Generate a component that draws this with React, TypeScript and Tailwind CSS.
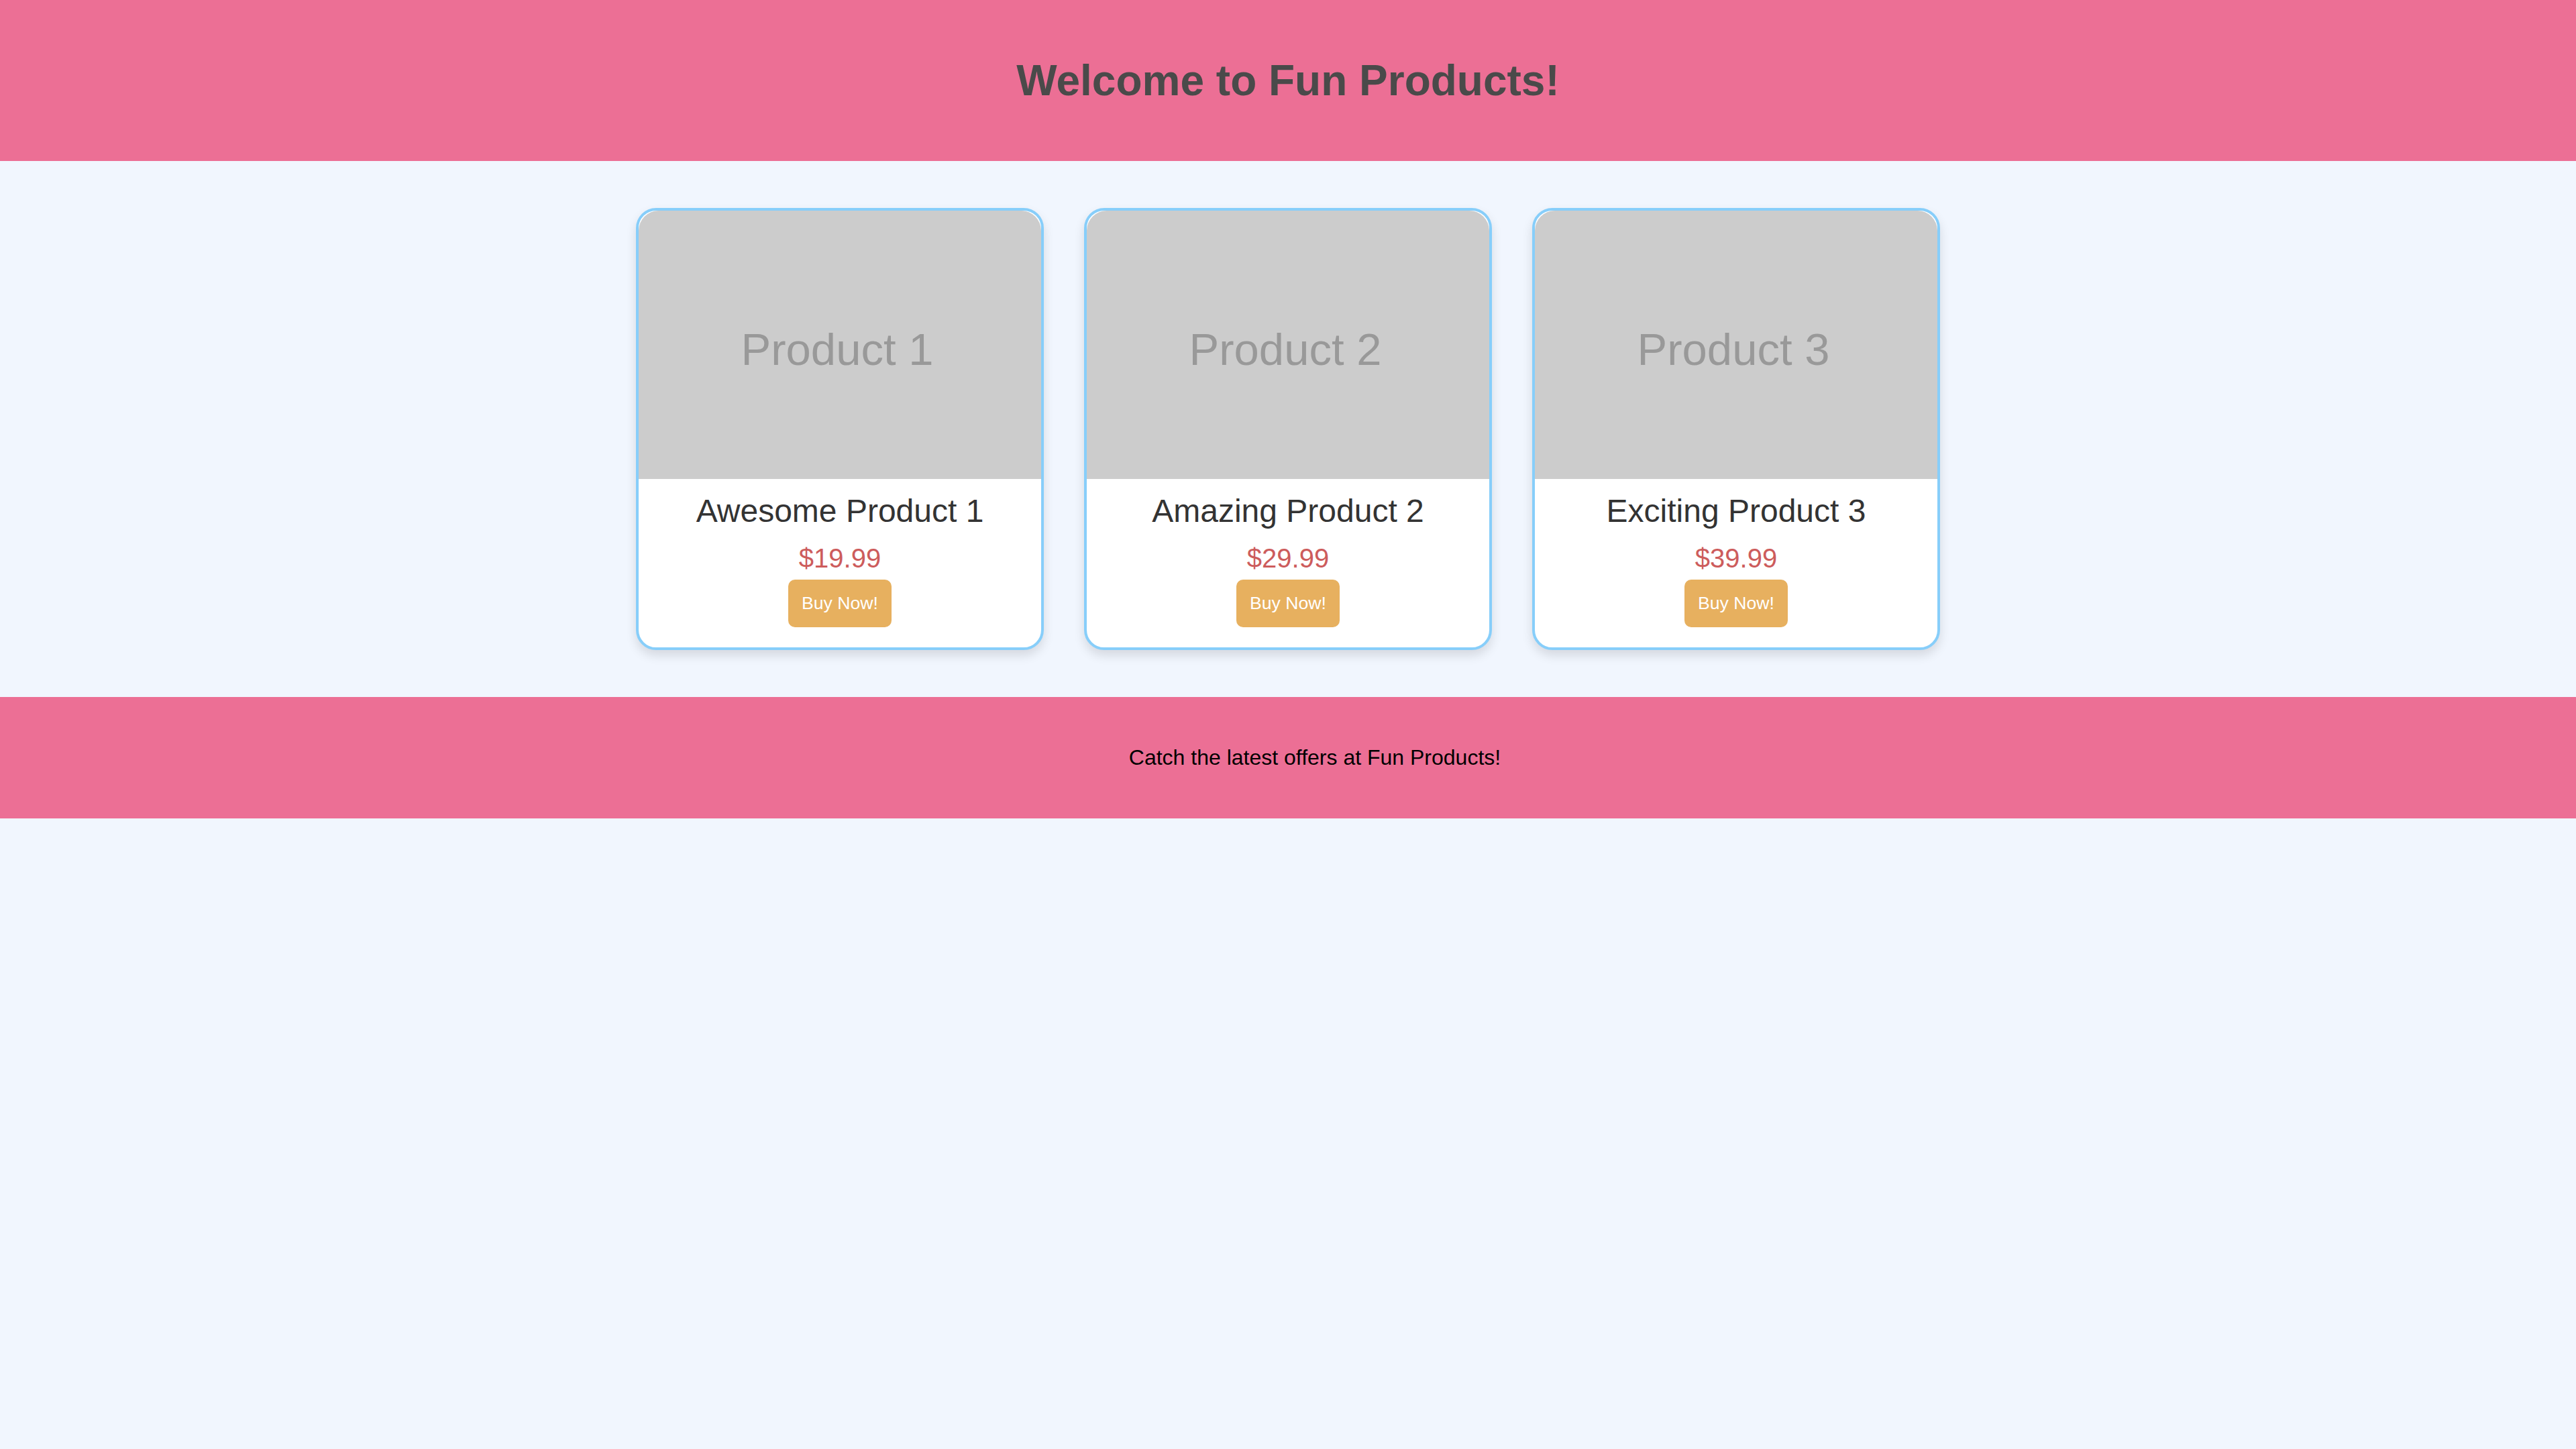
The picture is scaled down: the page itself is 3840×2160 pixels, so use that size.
import React from "react";

const products = [
  { img: "Product 1", name: "Awesome Product 1", price: "$19.99" },
  { img: "Product 2", name: "Amazing Product 2", price: "$29.99" },
  { img: "Product 3", name: "Exciting Product 3", price: "$39.99" },
];

export default function App() {
  return (
    <div
      className="min-h-[2160px] w-full bg-[#F1F6FE] overflow-hidden"
      style={{ fontFamily: '"Liberation Sans", Arial, sans-serif' }}
    >
      <header className="h-[240px] bg-[#EC6F95] flex items-center justify-center">
        <h1 className="text-[64px] leading-[74px] font-bold text-[#4a4a4a]">
          Welcome to Fun Products!
        </h1>
      </header>

      <main className="flex justify-center gap-[60px] py-[70px]">
        {products.map((p) => (
          <div
            key={p.name}
            className="w-[608px] border-[4px] border-[#87CEFA] rounded-[30px] bg-white overflow-hidden shadow-[0_8px_16px_rgba(0,0,0,0.12)] flex flex-col items-center"
          >
            <div className="w-[600px] h-[400px] bg-[#cccccc] rounded-t-[30px] flex items-center justify-center">
              <span className="text-[67px] leading-[78px] text-[#999999] pt-[14px] pr-[8px]">
                {p.img}
              </span>
            </div>
            <h3 className="mt-[20px] text-[48px] leading-[55px] text-[#333333]">
              {p.name}
            </h3>
            <p className="mt-[20px] text-[40px] leading-[46px] text-[#CD5C5C]">
              {p.price}
            </p>
            <button className="mt-[9px] mb-[30px] px-[20px] py-[20px] bg-[#E7B05F] text-white text-[26.67px] leading-[31px] rounded-[10px]">
              Buy Now!
            </button>
          </div>
        ))}
      </main>

      <footer className="h-[181px] bg-[#EC6F95] flex items-center justify-center pl-[80px]">
        <p className="text-[32px] leading-[37px] text-black">
          Catch the latest offers at Fun Products!
        </p>
      </footer>
    </div>
  );
}
